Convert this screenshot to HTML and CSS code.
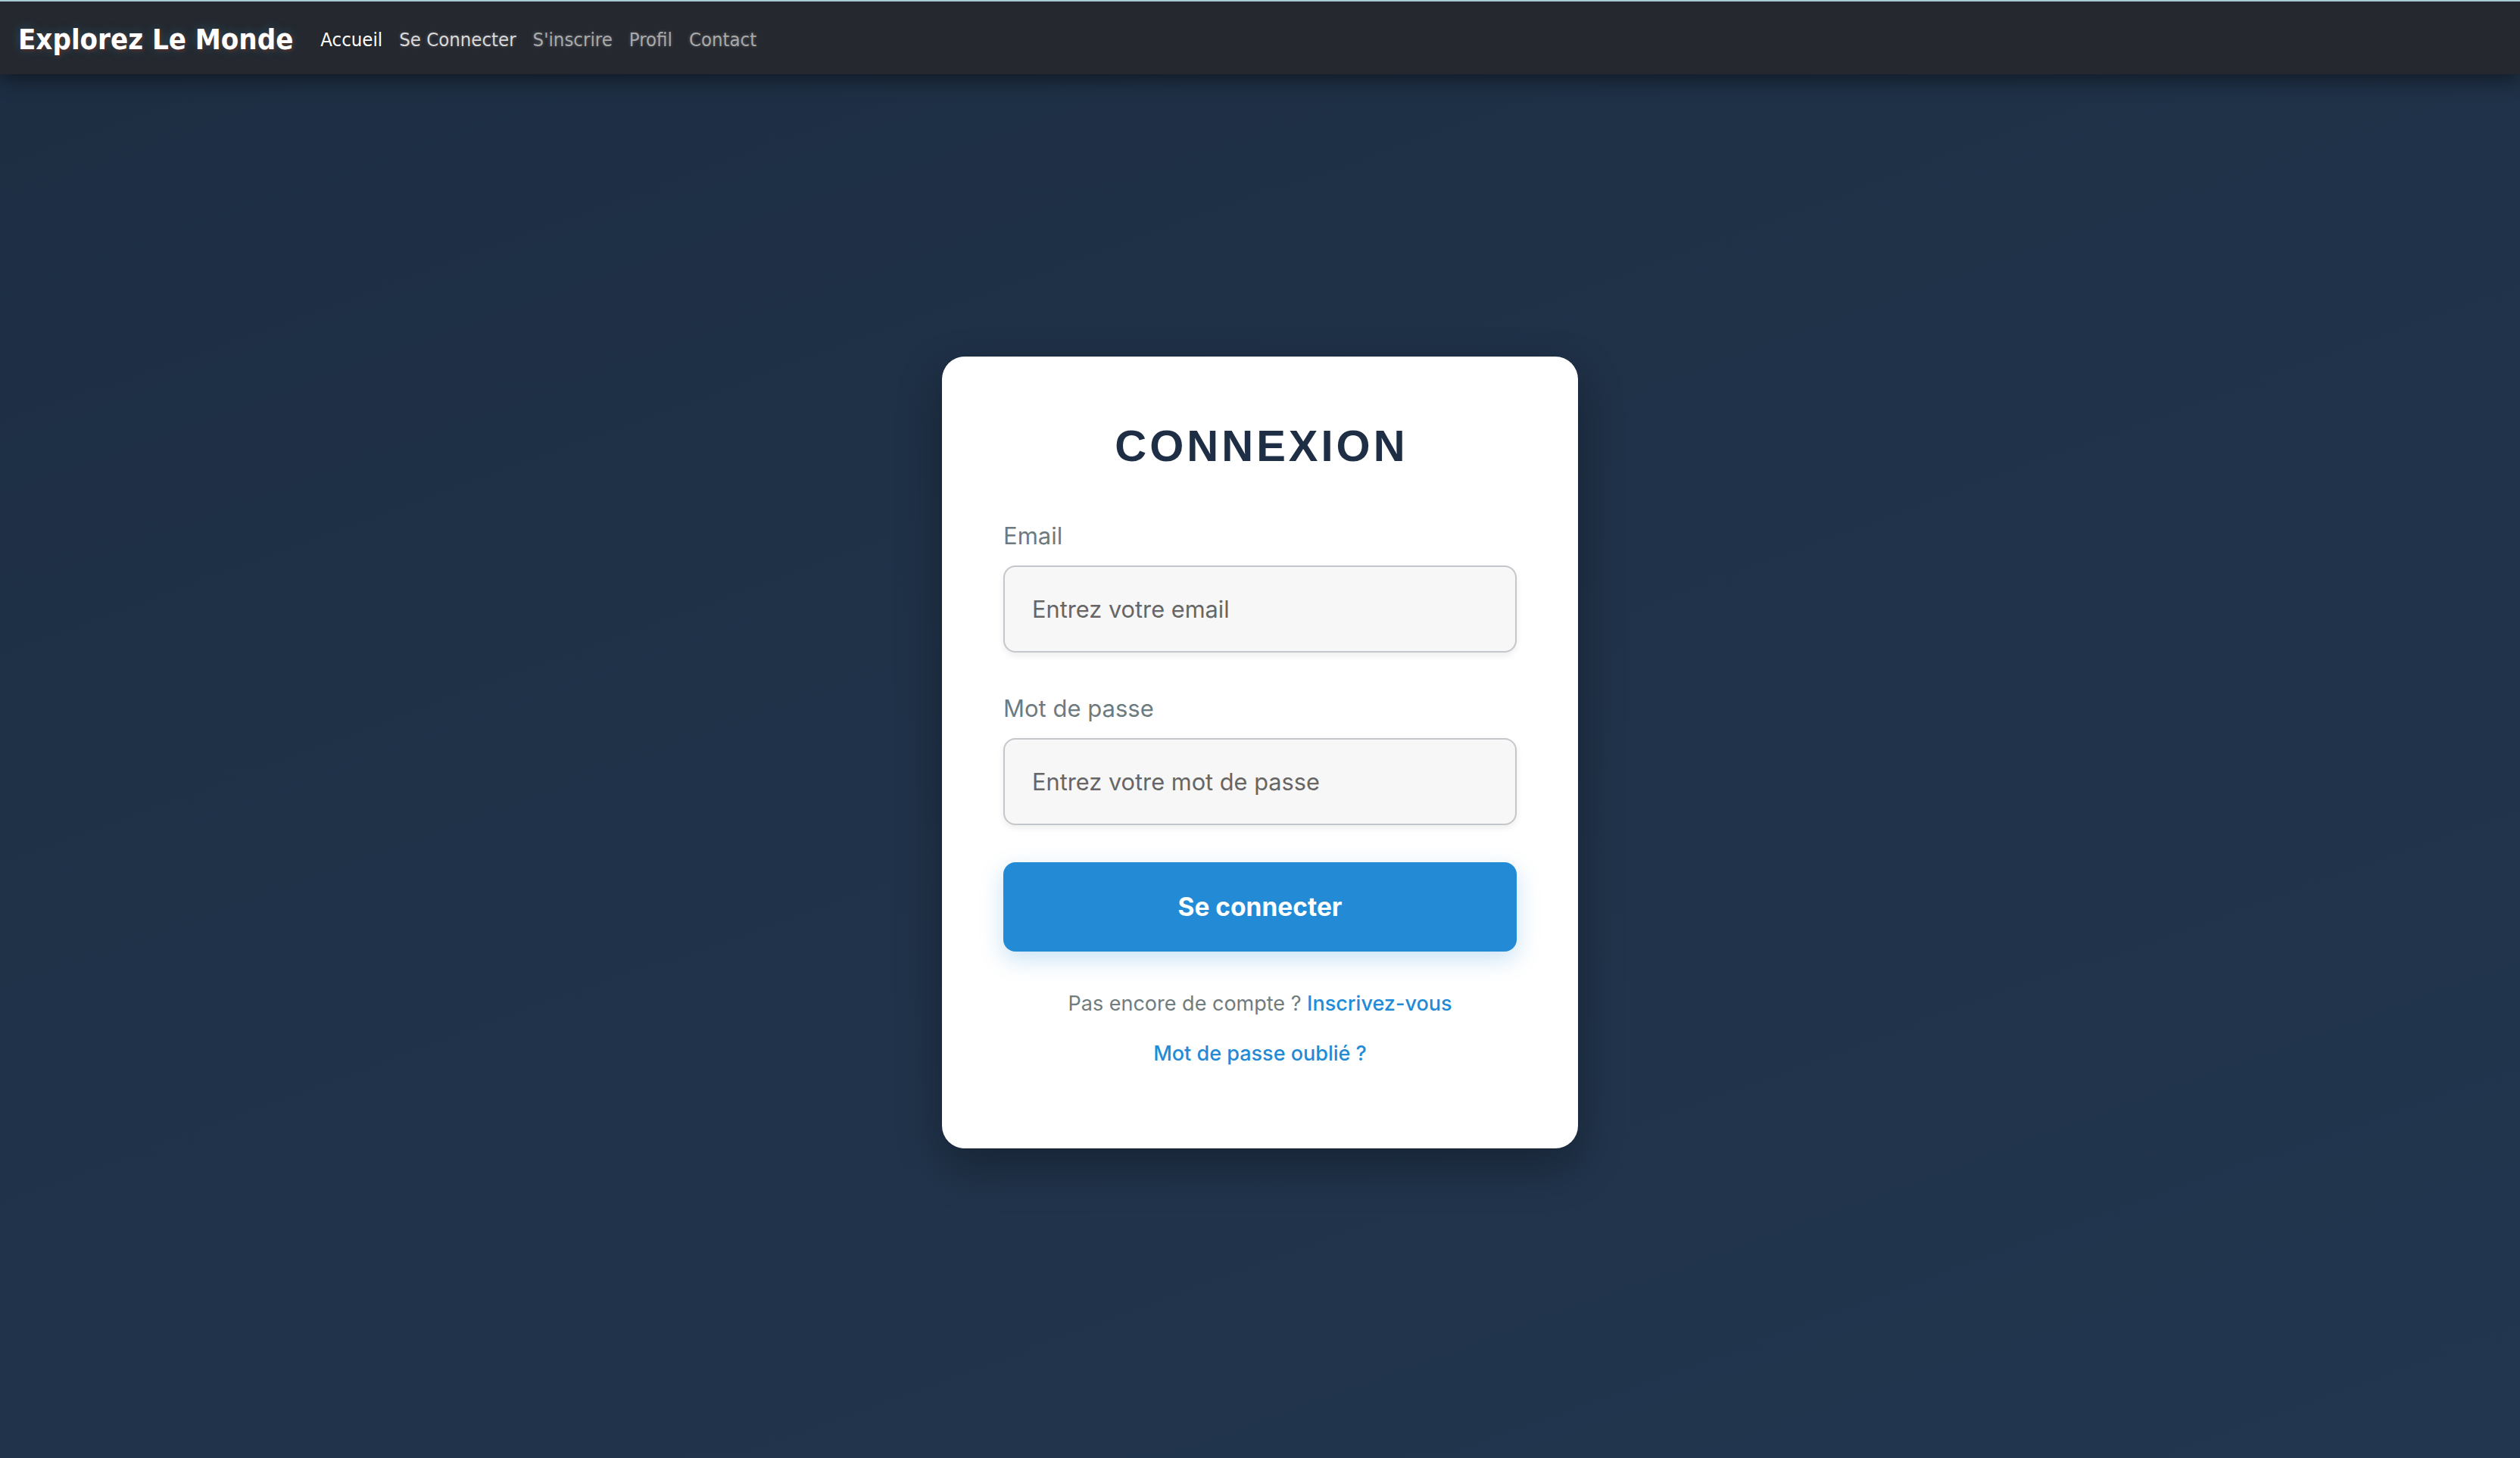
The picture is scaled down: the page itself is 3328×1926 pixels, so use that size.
FILE: index.html
```html
<!DOCTYPE html>
<html lang="fr">
<head>
<meta charset="utf-8">
<title>Connexion - Explorez Le Monde</title>
<link rel="stylesheet" href="styles.css">
</head>
<body>
<nav class="navbar">
  <a class="logo" href="#">Explorez Le Monde</a>
  <ul class="nav-links">
    <li><a class="nav-link active" href="#">Accueil</a></li>
    <li><a class="nav-link hover" href="#">Se Connecter</a></li>
    <li><a class="nav-link" href="#">S'inscrire</a></li>
    <li><a class="nav-link" href="#">Profil</a></li>
    <li><a class="nav-link" href="#">Contact</a></li>
  </ul>
</nav>
<main class="main">
  <section class="card">
    <h1 class="card-title">CONNEXION</h1>
    <form class="form">
      <div class="form-group">
        <label class="label" for="email">Email</label>
        <input class="input" id="email" type="email" placeholder="Entrez votre email">
      </div>
      <div class="form-group">
        <label class="label" for="pwd">Mot de passe</label>
        <input class="input" id="pwd" type="password" placeholder="Entrez votre mot de passe">
      </div>
      <button class="btn" type="button">Se connecter</button>
    </form>
    <p class="note first">Pas encore de compte ? <a class="link" href="#">Inscrivez-vous</a></p>
    <p class="note"><a class="link" href="#">Mot de passe oublié ?</a></p>
  </section>
</main>
</body>
</html>
```
FILE: styles.css
```css
* { box-sizing: border-box; }

html, body {
  margin: 0;
  padding: 0;
}

body {
  min-height: 100vh;
  font-family: "Inter", "Roboto", "Liberation Sans", sans-serif;
  background: linear-gradient(160deg, #1d2e43 0%, #203249 50%, #22364f 100%);
  color: #1e2f45;
}

.navbar {
  height: 98px;
  border-top: 2px solid #a9cbd6;
  background: #25282f;
  display: flex;
  align-items: center;
  padding: 4px 0 0 24px;
  box-shadow: 0 8px 24px rgba(0, 0, 0, 0.45);
  position: relative;
  z-index: 2;
}

.logo {
  font-family: "DejaVu Sans Condensed", "DejaVu Sans", sans-serif;
  font-weight: bold;
  font-size: 38px;
  color: #ffffff;
  text-decoration: none;
  margin-right: 36px;
  text-shadow: 2px 2px 4px rgba(120, 40, 20, 0.6), 0 0 14px rgba(40, 170, 210, 0.35);
}

.nav-links {
  list-style: none;
  margin: 0;
  padding: 0;
  display: flex;
  gap: 22px;
}

.nav-link {
  font-family: "DejaVu Sans Condensed", "DejaVu Sans", sans-serif;
  font-size: 25.5px;
  color: #a9a9a9;
  text-decoration: none;
  text-shadow: 0 0 4px rgba(200, 200, 200, 0.35);
}

.nav-link.active {
  color: #ffffff;
  text-shadow: none;
}

.nav-link.hover {
  color: #d9d9d9;
}

.main {
  display: flex;
  justify-content: center;
  align-items: flex-start;
  padding-top: 373px;
  padding-bottom: 200px;
}

.card {
  width: 840px;
  background: #ffffff;
  border-radius: 30px;
  padding: 83px 81px 105px;
  box-shadow: 0 24px 60px rgba(0, 0, 0, 0.3);
}

.card-title {
  margin: 0;
  font-family: "Liberation Sans", "Arial", sans-serif;
  font-weight: bold;
  font-size: 58px;
  line-height: 70px;
  letter-spacing: 4px;
  text-align: center;
  color: #1e2f45;
  padding-left: 4px;
}

.form {
  margin-top: 64px;
}

.form-group {
  display: flex;
  flex-direction: column;
  margin-bottom: 54px;
}

.form-group + .form-group {
  margin-bottom: 49px;
}

.label {
  font-size: 31px;
  line-height: 40px;
  color: #6d7b7f;
  margin-bottom: 19px;
}

.input {
  height: 115px;
  border: 2px solid #c3c6ca;
  border-radius: 16px;
  background: #f7f7f7;
  padding: 0 36px;
  font-family: "Inter", "Roboto", sans-serif;
  font-size: 30.75px;
  color: #333;
  box-shadow: 0 4px 10px rgba(0, 0, 0, 0.07);
  outline: none;
}

.input::placeholder {
  color: #666666;
}

.btn {
  display: block;
  width: 100%;
  height: 118px;
  border: none;
  border-radius: 16px;
  background: #238bd6;
  color: #ffffff;
  font-family: "Inter", "Roboto", sans-serif;
  font-weight: 700;
  font-size: 33.5px;
  box-shadow: 0 10px 30px rgba(35, 139, 214, 0.25);
  cursor: pointer;
}

.note {
  margin: 0;
  text-align: center;
  font-size: 27px;
  line-height: 40px;
  color: #717c7e;
}

.note.first {
  margin-top: 49px;
  margin-bottom: 26px;
}

.link {
  color: #238bd6;
  font-weight: 500;
  text-decoration: none;
}
```
